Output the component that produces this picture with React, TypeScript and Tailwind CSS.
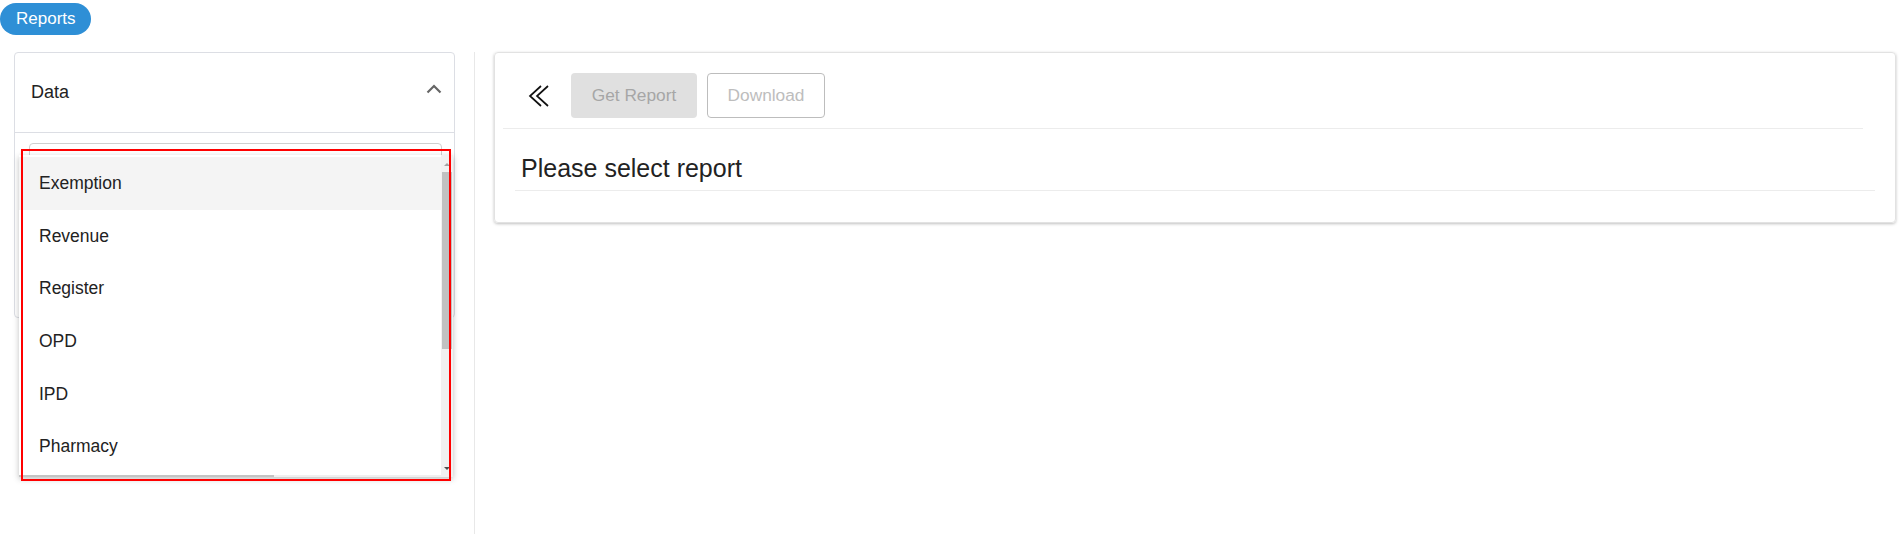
import React from "react";

const items = ["Exemption", "Revenue", "Register", "OPD", "IPD", "Pharmacy"];

export default function App() {
  return (
    <div className="relative w-[1904px] h-[534px] overflow-hidden bg-white font-['Liberation_Sans',Arial,sans-serif] text-[17px] text-[#222]">
      {/* top pill */}
      <div className="pt-[3px]">
        <span className="inline-flex h-[32px] items-center rounded-full bg-[#2e8fd6] pl-[16px] pr-[15px] text-[17px] text-white">
          Reports
        </span>
      </div>

      <div className="mt-[17px] flex h-[482px]">
        {/* left column */}
        <div className="w-[474px] shrink-0 pl-[14px] pr-[19px]">
          <div className="h-[266px] rounded-[4px] border border-[#dcdee4]">
            <div className="flex h-[80px] items-center justify-between border-b border-[#dcdee4] pl-[16px] pr-[12px]">
              <span className="text-[18px] text-[#222]">Data</span>
              <svg width="16" height="10" viewBox="0 0 16 10" className="mb-[8px]">
                <path d="M1.5 8.5 L8 2 L14.5 8.5" fill="none" stroke="#666" strokeWidth="2.2" />
              </svg>
            </div>
            <div className="pl-[14px] pr-[12px] pt-[10px]">
              <div className="h-[40px] rounded-[4px] border border-[#cfcfcf] pl-[10px] pt-[9px] text-[16px] text-[#b9cde6]">
                Report Category
              </div>
            </div>
          </div>
        </div>

        {/* divider */}
        <div className="w-px shrink-0 bg-[#e8e8e8]" />

        {/* right area */}
        <div className="flex-1 pl-[19px] pr-[8px]">
          <div className="h-[171px] rounded-[4px] border border-[#e2e2e2] shadow-[0_1px_3px_rgba(0,0,0,0.25)] pt-[20px]">
            <div className="flex h-[45px] items-center pl-[33px]">
              <svg width="22" height="22" viewBox="0 0 22 22" className="shrink-0">
                <path d="M13 1 L2 11 L13 21" fill="none" stroke="#111" strokeWidth="1.7" />
                <path d="M20 1 L9 11 L20 21" fill="none" stroke="#111" strokeWidth="1.7" />
              </svg>
              <button className="ml-[21px] h-[45px] w-[126px] rounded-[4px] bg-[#e0e0e0] text-[17.3px] text-[#a6a6a6]">
                Get Report
              </button>
              <button className="ml-[10px] h-[45px] w-[118px] rounded-[4px] border border-[#bdbdbd] bg-white text-[17.3px] text-[#bdbdbd]">
                Download
              </button>
            </div>
            <div className="ml-[8px] mr-[32px] mt-[10px] h-px bg-[#ececec]" />
            <div className="mx-[20px] mt-[24px] border-b border-[#ececec] pb-[6px] pl-[6px]">
              <div className="h-[31px] text-[25px] leading-[31px] text-[#222]">Please select report</div>
            </div>
          </div>
        </div>
      </div>

      {/* dropdown menu overlay */}
      <div className="absolute left-[19px] top-[155px] flex h-[322px] w-[434px] bg-white shadow-[0_2px_6px_rgba(0,0,0,0.25)]">
        <div className="flex flex-1 flex-col pt-[2px]">
          {items.map((it, i) => (
            <div
              key={it}
              className={`flex h-[52.6px] items-center pl-[20px] text-[17.5px] text-[#222] ${i === 0 ? "bg-[#f4f4f4]" : "bg-white"}`}
            >
              {it}
            </div>
          ))}
          <div className="mt-auto flex h-[2px] bg-[#f0f0f0]">
            <div className="w-[255px] bg-[#c4c4c4]" />
          </div>
        </div>
        <div className="relative w-[12px] bg-[#f1f1f1]">
          <svg width="12" height="8" viewBox="0 0 12 8" className="absolute left-0 top-[5px]">
            <path d="M3 6 L6 3 L9 6 Z" fill="#a3a3a3" />
          </svg>
          <div className="absolute left-[1px] right-[1px] top-[17px] h-[177px] bg-[#c1c1c1]" />
          <svg width="12" height="8" viewBox="0 0 12 8" className="absolute bottom-[4px] left-0">
            <path d="M3 2 L9 2 L6 5 Z" fill="#505050" />
          </svg>
        </div>
      </div>

      {/* red annotation rectangle */}
      <div className="pointer-events-none absolute left-[21px] top-[149px] h-[332px] w-[430px] border-2 border-[#ff0000]" />
    </div>
  );
}
